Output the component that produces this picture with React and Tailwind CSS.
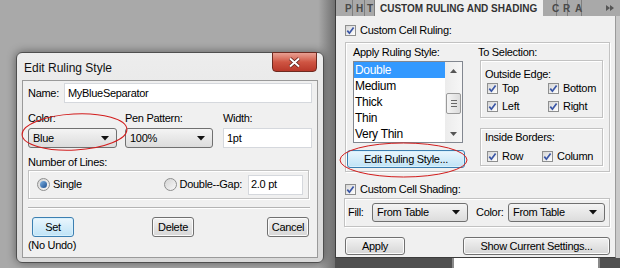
import React from "react";

const Arrow = () => (
  <svg width="8" height="5" viewBox="0 0 8 5">
    <path d="M0 0h8L4 4.5z" fill="#111" />
  </svg>
);

const Check = () => (
  <span className="w-[11px] h-[11px] shrink-0 border border-[#8e8f8f] bg-gradient-to-br from-[#d6d6d6] to-white flex items-center justify-center">
    <svg width="9" height="9" viewBox="0 0 9 9">
      <path d="M1.3 4.6 L3.4 7.2 L7.6 1.4" stroke="#3a56a6" strokeWidth="1.7" fill="none" />
    </svg>
  </span>
);

const CheckLabel = ({ label, className = "" }) => (
  <div className={`flex items-center gap-[4px] h-[13px] ${className}`}>
    <Check />
    <span>{label}</span>
  </div>
);

const Select = ({ value, className = "" }) => (
  <div
    className={`flex items-center justify-between pl-[4px] pr-[7px] rounded-[3px] border border-[#707070] bg-gradient-to-b from-[#f4f4f4] to-[#dcdcdc] ${className}`}
  >
    <span>{value}</span>
    <Arrow />
  </div>
);

const Button = ({ children, focused, className = "" }) => (
  <div
    className={`flex items-center justify-center rounded-[3px] border ${
      focused
        ? "border-[#3c7fb1] bg-gradient-to-b from-[#eaf6fd] to-[#bfe3f6] shadow-[inset_0_0_0_1px_#d8f0fc]"
        : "border-[#707070] bg-gradient-to-b from-[#f2f2f2] to-[#d6d6d6] shadow-[inset_0_0_0_1px_#fbfbfb]"
    } ${className}`}
  >
    {children}
  </div>
);

const Radio = ({ on }) => (
  <span className="w-[13px] h-[13px] rounded-full border border-[#8e8f8f] bg-gradient-to-br from-[#d4d4d4] to-[#f8f8f8] flex items-center justify-center shrink-0">
    {on && <span className="w-[7px] h-[7px] rounded-full bg-gradient-to-br from-[#7fb3e4] to-[#1d4f8f]" />}
  </span>
);

const GroupBox = ({ children, className = "" }) => (
  <div className={`border border-[#c2c2c2] shadow-[inset_1px_1px_0_#fff,1px_1px_0_#fff] ${className}`}>
    {children}
  </div>
);

const Dialog = () => (
  <div className="w-[308px] h-[211px] rounded-[6px] border border-[#4f4f4f] bg-gradient-to-b from-[#ededed] to-[#d9d9d9] shadow-[0_0_10px_rgba(0,0,0,0.45)] flex flex-col px-[5px] pb-[4px]">
    {/* title bar */}
    <div className="h-[27px] flex items-start justify-between">
      <span className="pl-[2px] pt-[6px] text-[12px] tracking-normal text-[#111]">Edit Ruling Style</span>
      <div className="w-[45px] h-[20px] -mt-[1px] mr-[1px] rounded-b-[4px] border border-[#6e2a20] bg-gradient-to-b from-[#e8a093] via-[#cf5543] to-[#b8382a] flex items-center justify-center">
        <svg width="13" height="11" viewBox="0 0 13 11">
          <path d="M2 1.5 L11 9.5 M11 1.5 L2 9.5" stroke="#5a1d16" strokeWidth="3.6" />
          <path d="M2 1.5 L11 9.5 M11 1.5 L2 9.5" stroke="#fff" strokeWidth="2" />
        </svg>
      </div>
    </div>

    {/* client area */}
    <div className="flex-1 border border-[#9a9a9a] bg-[#f0f0f0] px-[5px] flex flex-col">
      <div className="mt-[2px] h-[20px] flex items-center">
        <span className="w-[36px]">Name:</span>
        <div className="flex-1 h-[20px] bg-white border border-[#d5d8dd] flex items-center pl-[3px]">
          MyBlueSeparator
        </div>
      </div>

      <div className="mt-[9px] h-[13px] flex items-center">
        <span className="w-[97px]">Color:</span>
        <span className="w-[98px]">Pen Pattern:</span>
        <span>Width:</span>
      </div>
      <div className="mt-[3px] h-[20px] flex">
        <Select value="Blue" className="w-[89px] h-[20px]" />
        <Select value="100%" className="w-[88px] h-[20px] ml-[8px]" />
        <div className="w-[89px] h-[20px] ml-[10px] bg-white border border-[#d5d8dd] flex items-center pl-[3px]">
          1pt
        </div>
      </div>

      <div className="mt-[8px] h-[13px] flex items-center">Number of Lines:</div>
      <GroupBox className="mt-[1px] w-[281px] h-[29px] flex items-center pl-[8px] pr-[5px]">
        <Radio on />
        <span className="ml-[3px]">Single</span>
        <div className="ml-auto flex items-center">
          <Radio />
          <span className="ml-[3px]">Double--Gap:</span>
          <div className="ml-[6px] w-[55px] h-[20px] bg-white border border-[#d5d8dd] flex items-center pl-[2px]">
            2.0 pt
          </div>
        </div>
      </GroupBox>

      <div className="mt-[8px] w-[282px] h-[2px] border-t border-[#b4b4b4] border-b border-b-white" />

      <div className="mt-[8px] h-[20px] flex">
        <Button focused className="ml-[4px] w-[42px] h-[20px]">Set</Button>
        <Button className="ml-[78px] w-[42px] h-[20px]">Delete</Button>
        <Button className="ml-[73px] w-[42px] h-[20px]">Cancel</Button>
      </div>
      <div className="mt-[2px] h-[13px] flex items-center">(No Undo)</div>
    </div>
  </div>
);

const Tab = ({ letter, className = "" }) => (
  <div className={`h-full border-r border-[#7e7e7e] flex items-center text-[#4a4a4a] ${className}`}>{letter}</div>
);

const styles = ["Double", "Medium", "Thick", "Thin", "Very Thin"];

const Panel = () => (
  <div className="w-[285px] h-full flex flex-col">
    {/* tab strip */}
    <div className="h-[16px] flex bg-[#a9a9a9] border-l border-[#3c3c3c] font-bold text-[10px] tracking-normal">
      <Tab letter="P" className="w-[17px] pl-[9px]" />
      <Tab letter="H" className="w-[12px] pl-[3px]" />
      <Tab letter="T" className="w-[10px] pl-[2px]" />
      <div className="w-[168px] h-full bg-[#f0f0f0] flex items-center pl-[5px] text-[#333]">
        CUSTOM RULING AND SHADING
      </div>
      <Tab letter="C" className="w-[14px] pl-[9px]" />
      <Tab letter="R" className="w-[11px] pl-[6px]" />
      <Tab letter="A" className="w-[14px] pl-[7px]" />
      <div className="flex-1 flex items-center justify-end pr-[6px]">
        <svg width="8" height="6" viewBox="0 0 8 6">
          <path d="M0 0l4 3-4 3zM4 0l4 3-4 3z" fill="#555" />
        </svg>
      </div>
    </div>

    <div className="h-[242px] flex">
      <div className="w-[281px] h-full bg-[#f0f0f0] border-l border-b border-[#3c3c3c] border-r-[#9a9a9a] border-r flex flex-col">
        <CheckLabel label="Custom Cell Ruling:" className="mt-[8px] ml-[9px]" />

        <GroupBox className="mt-[5px] ml-[9px] w-[265px] h-[130px] flex">
          <div className="w-[119px] flex flex-col">
            <span className="mt-[3px] ml-[7px] h-[13px] flex items-center">Apply Ruling Style:</span>
            <div className="mt-[2px] ml-[7px] w-[110px] h-[82px] bg-white border border-[#828790] flex">
              <div className="flex-1 flex flex-col">
                {styles.map((s, i) => (
                  <div
                    key={s}
                    className={`h-[16px] pl-[1px] flex items-center text-[12px] ${
                      i === 0 ? "bg-[#3399ff] text-white" : "text-black"
                    }`}
                  >
                    {s}
                  </div>
                ))}
              </div>
              <div className="w-[17px] h-full bg-gradient-to-r from-[#ececec] to-[#f6f6f6] flex flex-col items-center">
                <div className="h-[17px] flex items-center justify-center">
                  <svg width="7" height="4" viewBox="0 0 7 4"><path d="M0 4h7L3.5 0z" fill="#555" /></svg>
                </div>
                <div className="mt-[14px] w-[15px] h-[21px] rounded-[2px] border border-[#9a9a9a] bg-gradient-to-r from-[#f4f4f4] to-[#dcdcdc] flex flex-col items-center justify-center gap-[2px]">
                  <span className="w-[6px] h-px bg-[#666]" />
                  <span className="w-[6px] h-px bg-[#666]" />
                  <span className="w-[6px] h-px bg-[#666]" />
                </div>
                <div className="mt-auto h-[17px] flex items-center justify-center">
                  <svg width="7" height="4" viewBox="0 0 7 4"><path d="M0 0h7L3.5 4z" fill="#555" /></svg>
                </div>
              </div>
            </div>
            <Button focused className="mt-[7px] ml-[1px] w-[118px] h-[18px]">Edit Ruling Style...</Button>
          </div>

          <div className="ml-[13px] flex flex-col">
            <span className="mt-[3px] h-[13px] flex items-center">To Selection:</span>
            <GroupBox className="mt-[1px] ml-[2px] w-[123px] h-[58px] flex flex-col">
              <span className="mt-[7px] ml-[4px] h-[13px] flex items-center">Outside Edge:</span>
              <div className="mt-[1px] ml-[6px] flex">
                <CheckLabel label="Top" className="w-[61px]" />
                <CheckLabel label="Bottom" />
              </div>
              <div className="mt-[5px] ml-[6px] flex">
                <CheckLabel label="Left" className="w-[61px]" />
                <CheckLabel label="Right" />
              </div>
            </GroupBox>
            <GroupBox className="mt-[10px] ml-[2px] w-[123px] h-[38px] flex flex-col">
              <span className="mt-[2px] ml-[4px] h-[13px] flex items-center">Inside Borders:</span>
              <div className="mt-[6px] ml-[6px] flex">
                <CheckLabel label="Row" className="w-[55px]" />
                <CheckLabel label="Column" />
              </div>
            </GroupBox>
          </div>
        </GroupBox>

        <CheckLabel label="Custom Cell Shading:" className="mt-[11px] ml-[9px]" />
        <GroupBox className="mt-[2px] ml-[8px] w-[266px] h-[29px] flex items-center pl-[3px]">
          <span className="w-[24px]">Fill:</span>
          <Select value="From Table" className="w-[96px] h-[19px]" />
          <span className="ml-[8px] w-[32px]">Color:</span>
          <Select value="From Table" className="w-[97px] h-[19px]" />
        </GroupBox>

        <div className="mt-[10px] flex">
          <Button className="ml-[9px] w-[60px] h-[18px]">Apply</Button>
          <Button className="ml-[58px] w-[147px] h-[18px]">Show Current Settings...</Button>
        </div>
      </div>
      <div className="flex-1 bg-[#c9c9c9]" />
    </div>

    {/* window peeking below the panel */}
    <div className="flex-1 flex bg-[#505050]">
      <div className="w-[117px]" />
      <div className="w-[148px] bg-white border-l-2 border-r-2 border-[#8a8a8a]" />
      <div className="flex-1" />
    </div>
  </div>
);

export default function App() {
  return (
    <div className="relative w-[620px] h-[268px] flex overflow-hidden bg-[#a9a9a9] text-[11px] tracking-[-0.3px] text-black font-['Liberation_Sans',Arial,sans-serif]">
      <div className="w-[335px] h-full pl-[16px] pt-[52px] bg-[linear-gradient(to_right,#a9a9a9_95%,#707070)]">
        <Dialog />
      </div>
      <Panel />

      {/* hand-drawn annotation ellipses */}
      <svg className="absolute inset-0 pointer-events-none" width="620" height="268">
        <ellipse cx="74.5" cy="132" rx="52.5" ry="18" fill="none" stroke="#d21c1c" strokeWidth="1" transform="rotate(-3 74.5 132)" />
        <ellipse cx="403.5" cy="160" rx="63.5" ry="17" fill="none" stroke="#d21c1c" strokeWidth="1" />
      </svg>
    </div>
  );
}
